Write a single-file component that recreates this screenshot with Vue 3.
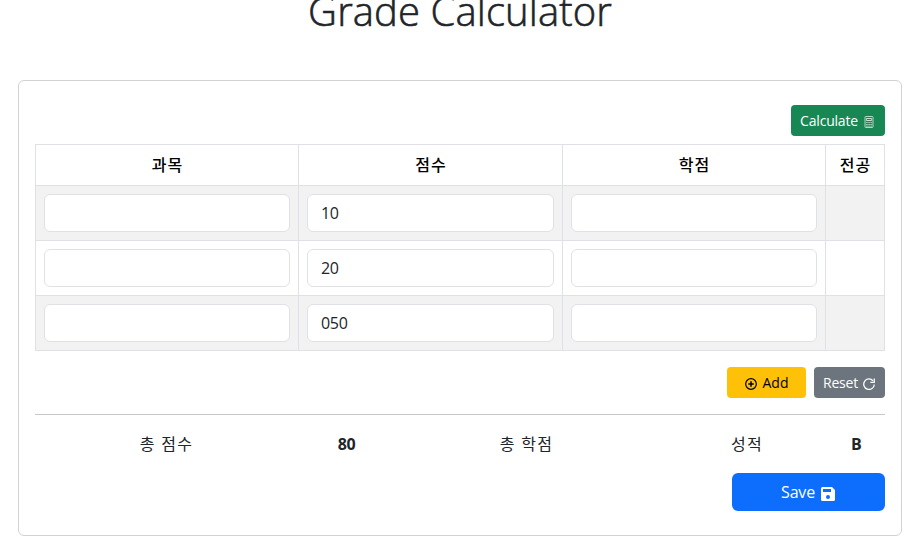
<script setup>
import { reactive } from 'vue'

const headers = ['과목', '점수', '학점', '전공']
const rows = reactive([
  { subject: '', score: '10', credit: '' },
  { subject: '', score: '20', credit: '' },
  { subject: '', score: '050', credit: '' },
])
</script>

<template>
  <main class="page">
    <h1 class="title"><span>Grade Calculator</span></h1>
    <section class="card">
      <div class="toolbar">
        <button class="btn small success">
          <span class="t-calc">Calculate</span>
          <svg class="i-calc" viewBox="0 0 10 12" fill="none" stroke="currentColor">
            <rect x="1" y=".5" width="8" height="11" rx=".7" stroke-width=".9" />
            <rect x="2.7" y="2.5" width="4.6" height="2" stroke-width="1" />
            <path d="M2.2 6.500h1.500m.6 0h1.500m.6 0h1.400M2.200 8.500h1.500m.6 0h1.500m.6 0h1.400M2.200 10.200h1.500m.6 0h1.500m.6 0h1.400" stroke-width=".9" />
          </svg>
        </button>
      </div>
      <table class="grades">
        <colgroup>
          <col class="wide" /><col class="middle" /><col class="wide" /><col class="narrow" />
        </colgroup>
        <thead>
          <tr><th v-for="h in headers" :key="h">{{ h }}</th></tr>
        </thead>
        <tbody>
          <tr v-for="(row, i) in rows" :key="i">
            <td><input v-model="row.subject" /></td>
            <td><input v-model="row.score" /></td>
            <td><input v-model="row.credit" /></td>
            <td></td>
          </tr>
        </tbody>
      </table>
      <div class="actions">
        <button class="btn small warning">
          <svg class="i-round" viewBox="0 0 16 16" fill="none" stroke="currentColor">
            <circle cx="8" cy="8" r="7.1" stroke-width="1.6" />
            <path d="M8 4.4v7.2M4.4 8h7.2" stroke-width="2" />
          </svg>
          <span class="t-add">Add</span>
        </button>
        <button class="btn small secondary">
          <span class="t-reset">Reset</span>
          <svg class="i-round" viewBox="0 0 16 16" fill="none" stroke="currentColor" stroke-width="1.7">
            <path d="M13.2 3.6A7 7 0 1 0 15 8.6" />
            <path d="M15 .7v5.1H9.8" />
          </svg>
        </button>
      </div>
      <hr />
      <div class="summary">
        <span>총 점수</span>
        <b>80</b>
        <span>총 학점</span>
        <b></b>
        <span>성적</span>
        <b>B</b>
      </div>
      <div class="footer">
        <button class="btn primary">
          <span class="t-save">Save</span>
          <svg class="i-save" viewBox="0 0 14 14">
            <path fill="currentColor" fill-rule="evenodd" d="M1.5 0H11l3 3v9.5a1.5 1.5 0 0 1-1.5 1.5h-11A1.5 1.5 0 0 1 0 12.5v-11A1.5 1.5 0 0 1 1.5 0ZM2 2v3h8V2ZM7 8a2 2 0 1 0 0 4 2 2 0 0 0 0-4Z" />
          </svg>
        </button>
      </div>
    </section>
  </main>
</template>

<style>
body {
  background: #fff;
  overflow: hidden;
}
</style>

<style scoped>
* {
  box-sizing: border-box;
}
.page {
  height: 558px;
  padding: 0 17px 0 18px;
  color: #212529;
  font-family: "Open Sans", "Noto Sans CJK KR", sans-serif;
  font-size: 16px;
  line-height: 24px;
}
.title {
  display: flow-root;
  height: 80px;
  margin: 0;
  text-align: center;
  font-size: 40px;
  font-weight: 300;
  line-height: 48px;
  letter-spacing: .1px;
  -webkit-text-stroke: .6px #212529;
}
.title span {
  display: block;
  margin-top: -13px;
}
.card {
  height: 456px;
  padding: 24px 16px;
  border: 1px solid #d0d2d4;
  border-radius: 6px;
}
.toolbar {
  display: flex;
  justify-content: flex-end;
  margin-bottom: 8px;
}
.btn {
  display: flex;
  align-items: center;
  justify-content: center;
  margin: 0;
  padding: 0;
  border: 0;
  font: inherit;
}
.btn.small {
  height: 31px;
  border-radius: 4px;
  font-size: 14px;
}
.btn.success {
  width: 94px;
  padding-right: 2px;
  gap: 6px;
  background: #198754;
  color: #fff;
}
.t-calc,
.t-reset {
  letter-spacing: -.2px;
}
.warning {
  width: 79px;
  gap: 6px;
  background: #ffc107;
  color: #000;
}
.btn.secondary {
  width: 71px;
  padding-right: 1px;
  gap: 5px;
  background: #6c757d;
  color: #fff;
}
.btn.primary {
  width: 153px;
  height: 38px;
  padding-right: 1px;
  gap: 6px;
  border-radius: 6px;
  background: #0d6efd;
  color: #fff;
}
.t-save {
  letter-spacing: -.2px;
}
.i-calc {
  width: 10px;
  height: 12px;
  margin-top: 3px;
  opacity: .75;
}
.i-round {
  width: 12px;
  height: 12px;
  margin-top: 3px;
}
.i-save {
  width: 14px;
  height: 14px;
  margin-top: 4px;
}
.grades {
  width: 850px;
  table-layout: fixed;
  border-collapse: collapse;
}
.wide {
  width: 263px;
}
.middle {
  width: 264px;
}
.grades th,
.grades td {
  padding: 8px;
  border: 1px solid #dee2e6;
}
.grades th {
  height: 41px;
  padding-left: 9px;
  color: #000;
  font-weight: 500;
  letter-spacing: 1px;
  line-height: 24px;
}
.grades td {
  height: 55px;
}
.grades tbody tr:nth-child(odd) td {
  background: #f2f2f2;
}
.grades input {
  display: block;
  width: 100%;
  height: 38px;
  padding: 6px 12px 6px 13px;
  border: 1px solid #dee2e6;
  border-radius: 6px;
  background: #fff;
  color: #212529;
  font: inherit;
  letter-spacing: -.3px;
}
.actions {
  display: flex;
  justify-content: flex-end;
  gap: 8px;
  margin-top: 16px;
}
hr {
  height: 1px;
  margin: 16px 0;
  border: 0;
  background: #c8c9ca;
}
.summary {
  display: grid;
  grid-template-columns: 263px 97px 263px 9px 160px 1fr;
  height: 26px;
  padding-top: 1px;
  text-align: center;
  letter-spacing: 1.3px;
}
.summary b {
  font-weight: 700;
  letter-spacing: -.5px;
}
.footer {
  display: flex;
  justify-content: flex-end;
  margin-top: 16px;
}
</style>
